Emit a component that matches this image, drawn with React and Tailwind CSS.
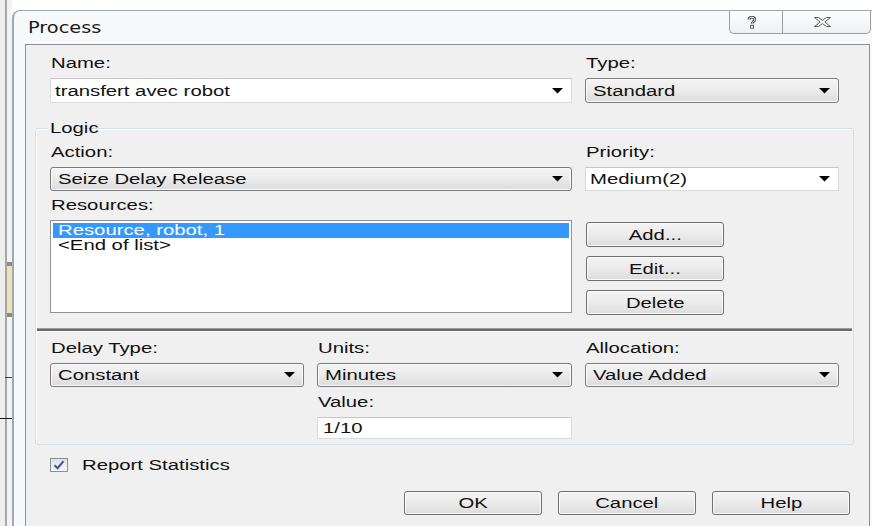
import React from 'react';

function T({ children }) {
  return <span className="inline-block origin-left scale-x-[1.45] whitespace-nowrap">{children}</span>;
}

function TC({ children }) {
  return <span className="inline-block origin-center scale-x-[1.45] whitespace-nowrap">{children}</span>;
}

function Label({ children, className = '' }) {
  return (
    <div className={`h-[16px] leading-[16px] pl-[1px] ${className}`}>
      <T>{children}</T>
    </div>
  );
}

function Arrow() {
  return (
    <svg width="11" height="6" viewBox="0 0 11 6" className="shrink-0">
      <path d="M0 0H11L5.5 5.5Z" fill="#000" />
    </svg>
  );
}

function EditCombo({ value, className = '' }) {
  return (
    <div
      className={`flex items-center justify-between border border-[#d7dadf] border-t-[#c3c6cb] bg-white pl-[4px] pr-[8px] ${className}`}
    >
      <T>{value}</T>
      <Arrow />
    </div>
  );
}

function DropCombo({ value, className = '' }) {
  return (
    <div
      className={`flex items-center justify-between rounded-[3px] border border-[#7b7b7b] bg-linear-to-b from-[#f4f4f4] via-[#ebebeb] to-[#dbdbdb] pl-[7px] pr-[8px] shadow-[inset_0_0_0_1px_#fbfbfb] ${className}`}
    >
      <T>{value}</T>
      <Arrow />
    </div>
  );
}

function Button({ children, className = '' }) {
  return (
    <div
      className={`flex items-center justify-center rounded-[3px] border border-[#707070] bg-linear-to-b from-[#f4f4f4] via-[#ebebeb] to-[#dcdcdc] shadow-[inset_0_0_0_1px_#fbfbfb] ${className}`}
    >
      <TC>{children}</TC>
    </div>
  );
}

function Backdrop() {
  // sliver of the application window behind the dialog
  return (
    <div className="relative flex w-[12px] shrink-0">
      <div className="w-[5px] bg-[#eeeeee]" />
      <div className="w-[2px] bg-[#a6a6a6]" />
      <div className="flex w-[5px] flex-col">
        <div className="h-[262px] bg-[#f3f3f3]" />
        <div className="h-[4px] bg-[#8d8d8d]" />
        <div className="h-[47px] bg-[#e9e5b2]" />
        <div className="h-[4px] bg-[#8a8a8a]" />
        <div className="flex-1 bg-[#f3f3f3]" />
      </div>
      <div className="absolute left-[5px] top-[377px] h-[1px] w-[7px] bg-[#2233aa]" />
      <div className="absolute left-0 top-[418px] h-[1px] w-[12px] bg-[#111111]" />
    </div>
  );
}

function TitleBar() {
  return (
    <div className="flex h-[33px] items-start justify-between">
      <div className="self-center pl-[14px] font-['DejaVu_Sans',sans-serif] text-[15px] leading-[18px] text-[#1a1a1a]">
        <span className="inline-block origin-left scale-x-[1.29] whitespace-nowrap">Process</span>
      </div>
      <div className="mr-[1px] flex">
        <div className="flex h-[23px] w-[53px] items-center justify-center rounded-bl-[5px] border-b border-l border-[#9a9ea3] bg-linear-to-b from-[#fdfdfd] to-[#eef0f2] pr-[8px]">
          <svg width="10" height="13" viewBox="0 0 10 13">
            <path
              d="M2 3.8C2 2 3.3 1.2 4.8 1.2C6.6 1.2 7.8 2.3 7.8 3.6C7.8 5.4 5.1 5.7 5.1 7.8"
              fill="none"
              stroke="#4a4a4a"
              strokeWidth="2.8"
            />
            <path
              d="M2 3.8C2 2 3.3 1.2 4.8 1.2C6.6 1.2 7.8 2.3 7.8 3.6C7.8 5.4 5.1 5.7 5.1 7.8"
              fill="none"
              stroke="#ffffff"
              strokeWidth="1"
            />
            <rect x="3.6" y="9.3" width="3" height="2.8" fill="#fff" stroke="#4a4a4a" strokeWidth="0.9" />
          </svg>
        </div>
        <div className="flex h-[23px] w-[89px] items-center justify-center rounded-br-[5px] border-b border-l border-r border-[#9a9ea3] bg-linear-to-b from-[#fdfdfd] to-[#eef0f2] pr-[8px]">
          <svg width="17" height="10" viewBox="0 0 17 10">
            <path
              d="M0.5 0.5H4.5L8.5 3.4L12.5 0.5H16.5L10.8 5L16.5 9.5H12.5L8.5 6.6L4.5 9.5H0.5L6.2 5Z"
              fill="#ffffff"
              stroke="#5a5a5a"
              strokeWidth="1"
              strokeLinejoin="round"
            />
          </svg>
        </div>
      </div>
    </div>
  );
}

export default function App() {
  return (
    <div className="flex h-[526px] w-[872px] overflow-hidden bg-white font-['Liberation_Sans',Arial,sans-serif] text-[14px] leading-[16px] text-[#111111]">
      <Backdrop />
      <div className="mt-[10px] flex min-w-0 flex-1 flex-col rounded-tl-[8px] border-l-2 border-t border-[#a3a8ae] bg-[#f7f9fb]">
        <TitleBar />

        <div className="ml-[11px] mr-[2px] flex flex-1 flex-col border-l border-r border-t border-[#8c9095] bg-[#f0f0f0] pl-[9px] pr-[15px] pt-[10px]">
          {/* Name / Type */}
          <div className="mx-[15px] grid grid-cols-[254px_255px_1fr] gap-x-[13px]">
            <Label className="col-span-2">Name:</Label>
            <Label>Type:</Label>
            <EditCombo className="col-span-2 mt-[7px] h-[25px]" value="transfert avec robot" />
            <DropCombo className="mt-[7px] h-[25px]" value="Standard" />
          </div>

          {/* Logic group */}
          <div className="relative mt-[25px] rounded-[3px] border border-[#d5dfe5] px-[14px] pb-[5px] pt-[15px] shadow-[inset_1px_1px_0_#ffffff]">
            <div className="absolute left-[12px] top-[-9px] h-[16px] bg-[#f0f0f0] px-[2px] leading-[16px]">
              <T>Logic</T>
            </div>

            <div className="grid grid-cols-[254px_255px_1fr] gap-x-[13px]">
              <Label className="col-span-2">Action:</Label>
              <Label>Priority:</Label>
              <DropCombo className="col-span-2 mt-[7px] h-[24px]" value="Seize Delay Release" />
              <EditCombo className="mt-[7px] h-[24px]" value="Medium(2)" />

              <Label className="col-span-3 mt-[6px]">Resources:</Label>
              <div className="col-span-2 mt-[7px] h-[93px] border border-[#8f9296] bg-white p-[2px]">
                <div className="h-[15px] bg-[#3399ff] pl-[5px] leading-[15px] text-white">
                  <T>Resource, robot, 1</T>
                </div>
                <div className="h-[15px] pl-[5px] leading-[15px]">
                  <T>&lt;End of list&gt;</T>
                </div>
              </div>
              <div className="ml-[1px] mt-[9px] flex flex-col gap-[9px]">
                <Button className="h-[25px] w-[138px]">Add...</Button>
                <Button className="h-[25px] w-[138px]">Edit...</Button>
                <Button className="h-[25px] w-[138px]">Delete</Button>
              </div>
            </div>

            <div className="-mx-[13px] mt-[13px]">
              <div className="h-[1px] bg-[#9c9c9c]" />
              <div className="h-[2px] bg-[#6a6a6a]" />
              <div className="h-[1px] bg-white" />
            </div>

            <div className="mt-[8px] grid grid-cols-[254px_255px_1fr] gap-x-[13px]">
              <Label>Delay Type:</Label>
              <Label>Units:</Label>
              <Label>Allocation:</Label>
              <DropCombo className="mt-[7px] h-[24px]" value="Constant" />
              <DropCombo className="mt-[7px] h-[24px]" value="Minutes" />
              <DropCombo className="mt-[7px] h-[24px]" value="Value Added" />
              <Label className="col-start-2 mt-[7px]">Value:</Label>
              <div className="col-start-2 mt-[7px] flex h-[22px] items-center border border-[#d7dadf] border-t-[#c3c6cb] bg-white pl-[5px]">
                <T>1/10</T>
              </div>
            </div>
          </div>

          {/* Report Statistics */}
          <div className="ml-[15px] mt-[12px] flex h-[16px] items-center gap-[14px]">
            <div className="flex h-[14px] w-[18px] items-center justify-center border border-[#8e8f8f] bg-linear-to-b from-[#dfe2e6] to-[#f7f7f7]">
              <svg width="12" height="10" viewBox="0 0 12 10">
                <path d="M1.5 5.2L4.6 8.2L10.5 1.2" fill="none" stroke="#3d55a0" strokeWidth="2" />
              </svg>
            </div>
            <T>Report Statistics</T>
          </div>

          {/* Dialog buttons */}
          <div className="mt-[18px] flex justify-end gap-[16px] pr-[4px]">
            <Button className="h-[24px] w-[138px]">OK</Button>
            <Button className="h-[24px] w-[138px]">Cancel</Button>
            <Button className="h-[24px] w-[138px]">Help</Button>
          </div>
        </div>
      </div>
    </div>
  );
}
